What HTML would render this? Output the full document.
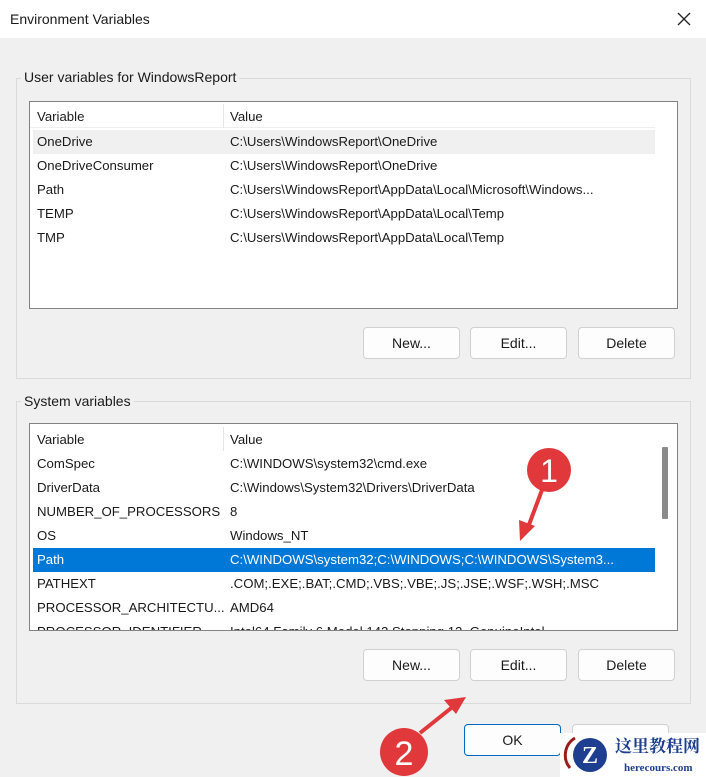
<!DOCTYPE html>
<html><head><meta charset="utf-8"><style>
*{margin:0;padding:0;box-sizing:border-box}
body{width:706px;height:777px;overflow:hidden;background:#f0f0f0;font-family:"Liberation Sans",sans-serif;font-size:14px;color:#1a1a1a;position:relative}
.a{position:absolute;white-space:nowrap}
.title{position:absolute;left:0;top:0;width:706px;height:38px;background:#fff}
.grp{position:absolute;border:1px solid #dadada;}
.lbl{position:absolute;background:#f0f0f0;padding:0 3px;font-size:14px}
.list{position:absolute;background:#fff;border:1px solid #828282;overflow:hidden;font-size:13.2px}
.btn{position:absolute;width:97px;height:32px;background:#fdfdfd;border:1px solid #d0d0d0;border-radius:4px;text-align:center;line-height:30px;font-size:14px}
.row{position:absolute;left:3px;width:622px;height:24px;line-height:24px}
.row span{position:absolute}
</style></head><body>
<div class="title"></div>
<div class="a" style="left:10px;top:11px;font-size:14px">Environment Variables</div>
<svg class="a" style="left:677px;top:12px" width="14" height="14"><path d="M1 1L13 13M13 1L1 13" stroke="#222" stroke-width="1.3"/></svg>

<div class="grp" style="left:16px;top:78px;width:675px;height:301px"></div>
<div class="lbl" style="left:21px;top:69px">User variables for WindowsReport</div>
<div class="list" style="left:29px;top:101px;width:649px;height:208px">
 <div class="a" style="left:0;top:0;width:625px;height:26px;border-bottom:1px solid #eee"></div>
 <div class="a" style="left:193px;top:2px;width:1px;height:24px;background:#e5e5e5"></div>
 <div class="a" style="left:7px;top:7px">Variable</div><div class="a" style="left:200px;top:7px">Value</div>
 <div class="row" style="top:28px;background:#f0f0f0"><span style="left:4px">OneDrive</span><span style="left:197px">C:\Users\WindowsReport\OneDrive</span></div>
 <div class="row" style="top:52px"><span style="left:4px">OneDriveConsumer</span><span style="left:197px">C:\Users\WindowsReport\OneDrive</span></div>
 <div class="row" style="top:76px"><span style="left:4px">Path</span><span style="left:197px">C:\Users\WindowsReport\AppData\Local\Microsoft\Windows...</span></div>
 <div class="row" style="top:100px"><span style="left:4px">TEMP</span><span style="left:197px">C:\Users\WindowsReport\AppData\Local\Temp</span></div>
 <div class="row" style="top:124px"><span style="left:4px">TMP</span><span style="left:197px">C:\Users\WindowsReport\AppData\Local\Temp</span></div>
</div>
<div class="btn" style="left:363px;top:327px">New...</div>
<div class="btn" style="left:470px;top:327px">Edit...</div>
<div class="btn" style="left:578px;top:327px">Delete</div>

<div class="grp" style="left:16px;top:401px;width:675px;height:303px"></div>
<div class="lbl" style="left:21px;top:393px">System variables</div>
<div class="list" style="left:29px;top:423px;width:649px;height:208px">
 <div class="a" style="left:0;top:0;width:625px;height:27px"></div>
 <div class="a" style="left:193px;top:3px;width:1px;height:24px;background:#e5e5e5"></div>
 <div class="a" style="left:7px;top:8px">Variable</div><div class="a" style="left:200px;top:8px">Value</div>
 <div class="row" style="top:28px"><span style="left:4px">ComSpec</span><span style="left:197px">C:\WINDOWS\system32\cmd.exe</span></div>
 <div class="row" style="top:52px"><span style="left:4px">DriverData</span><span style="left:197px">C:\Windows\System32\Drivers\DriverData</span></div>
 <div class="row" style="top:76px"><span style="left:4px">NUMBER_OF_PROCESSORS</span><span style="left:197px">8</span></div>
 <div class="row" style="top:100px"><span style="left:4px">OS</span><span style="left:197px">Windows_NT</span></div>
 <div class="row" style="top:124px;background:#0078d7;color:#fff"><span style="left:4px">Path</span><span style="left:197px">C:\WINDOWS\system32;C:\WINDOWS;C:\WINDOWS\System3...</span></div>
 <div class="row" style="top:148px"><span style="left:4px">PATHEXT</span><span style="left:197px">.COM;.EXE;.BAT;.CMD;.VBS;.VBE;.JS;.JSE;.WSF;.WSH;.MSC</span></div>
 <div class="row" style="top:172px"><span style="left:4px">PROCESSOR_ARCHITECTU...</span><span style="left:197px">AMD64</span></div>
 <div class="row" style="top:196px"><span style="left:4px">PROCESSOR_IDENTIFIER</span><span style="left:197px">Intel64 Family 6 Model 142 Stepping 12, GenuineIntel</span></div>
 <div class="a" style="left:626px;top:0;width:22px;height:208px;background:#fff"></div>
 <div class="a" style="left:632px;top:23px;width:6px;height:72px;background:#8a8a8a;border-radius:1px"></div>
</div>
<div class="btn" style="left:363px;top:649px">New...</div>
<div class="btn" style="left:470px;top:649px">Edit...</div>
<div class="btn" style="left:578px;top:649px">Delete</div>

<div class="btn" style="left:464px;top:724px;border:1px solid #0067c0">OK</div>
<div class="btn" style="left:572px;top:724px">Cancel</div>

<svg class="a" style="left:0;top:0" width="706" height="777">
 <g fill="#e0383b" stroke="#e0383b">
  <line x1="542" y1="490" x2="527" y2="530" stroke-width="4"/>
  <polygon points="520,541 519,520 535,526" stroke="none"/>
  <line x1="420" y1="733" x2="455" y2="705" stroke-width="4"/>
  <polygon points="466,697 444,700 456,714" stroke="none"/>
  <circle cx="549" cy="470" r="22" stroke="none"/>
  <circle cx="404" cy="752" r="24" stroke="none"/>
 </g>
 <text x="549" y="482" fill="#fff" font-family="Liberation Sans" font-size="32" text-anchor="middle">1</text>
 <text x="404" y="765" fill="#fff" font-family="Liberation Sans" font-size="34" text-anchor="middle">2</text>
 <rect x="560" y="733" width="146" height="44" fill="#fff"/>
 <path d="M575 738a20 20 0 0 0 -5 30" stroke="#9b1b1b" stroke-width="3" fill="none"/>
 <circle cx="590" cy="755" r="17" fill="#1e3f8f"/>
 <text x="590" y="763" fill="#fff" font-family="Liberation Serif" font-weight="bold" font-size="24" text-anchor="middle">Z</text>
 <text x="615" y="752" fill="#1e3f8f" font-family="Noto Serif CJK SC, serif" font-weight="bold" font-size="17">这里教程网</text>
 <text x="624" y="771" fill="#1e3f8f" font-family="Liberation Serif" font-weight="bold" font-size="11">herecours.com</text>
</svg>
</body></html>
